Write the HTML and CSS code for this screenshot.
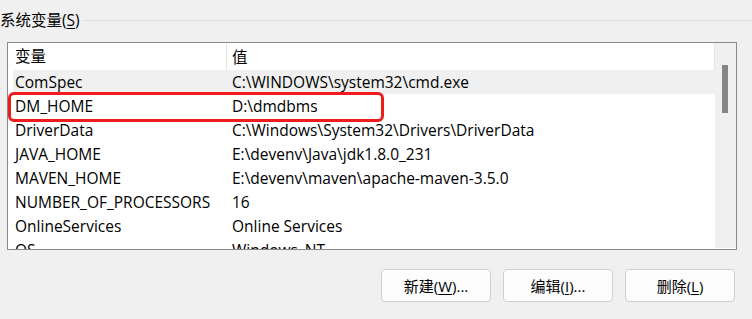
FILE: index.html
```html
<!DOCTYPE html>
<html lang="zh-CN">
<head>
<meta charset="utf-8">
<link rel="stylesheet" href="styles.css">
</head>
<body>
<div class="page">
  <div class="group-title"><span class="label">系统变量(<u>S</u>)</span><span class="rule"></span></div>
  <div class="listbox">
    <div class="list">
      <div class="row head"><div class="c1">变量</div><div class="c2">值</div></div>
      <div class="row sel"><div class="c1">ComSpec</div><div class="c2">C:\WINDOWS\system32\cmd.exe</div></div>
      <div class="row"><div class="c1">DM_HOME</div><div class="c2">D:\dmdbms</div></div>
      <div class="row"><div class="c1">DriverData</div><div class="c2">C:\Windows\System32\Drivers\DriverData</div></div>
      <div class="row"><div class="c1">JAVA_HOME</div><div class="c2">E:\devenv\Java\jdk1.8.0_231</div></div>
      <div class="row"><div class="c1">MAVEN_HOME</div><div class="c2">E:\devenv\maven\apache-maven-3.5.0</div></div>
      <div class="row"><div class="c1">NUMBER_OF_PROCESSORS</div><div class="c2">16</div></div>
      <div class="row"><div class="c1">OnlineServices</div><div class="c2">Online Services</div></div>
      <div class="row"><div class="c1">OS</div><div class="c2">Windows_NT</div></div>
    </div>
    <div class="scrollbar"><div class="thumb"></div></div>
    <div class="highlight"></div>
  </div>
  <div class="buttons">
    <button class="btn">新建(<u>W</u>)...</button>
    <button class="btn">编辑(<u>I</u>)...</button>
    <button class="btn">删除(<u>L</u>)</button>
  </div>
</div>
</body>
</html>
```

FILE: styles.css
```css
html, body {
  margin: 0;
  padding: 0;
  background: #f0f0f0;
}
.page {
  width: 752px;
  height: 319px;
  overflow: hidden;
  font-family: "Open Sans", "Noto Sans CJK SC", sans-serif;
  font-size: 15.5px;
  color: #000;
}
.group-title {
  display: flex;
  align-items: center;
  height: 22px;
  margin-top: 9px;
}
.group-title .label {
  white-space: nowrap;
  line-height: 22px;
}
.group-title u { text-underline-offset: 2px; }
.group-title .rule {
  flex: 1;
  height: 1px;
  background: #dcdcdc;
  margin-left: 3px;
}
.listbox {
  position: relative;
  margin-top: 11px;
  margin-left: 7px;
  width: 728px;
  height: 206px;
  border: 1px solid #8a8a8a;
  background: #fff;
  display: flex;
  overflow: hidden;
}
.list {
  flex: 1;
  padding-left: 5px;
  min-width: 0;
}
.row {
  display: flex;
  height: 24px;
  align-items: center;
  white-space: nowrap;
}
.row.head {
  height: 27px;
  margin-left: -5px;
  padding-left: 5px;
  border-right: 1px solid #e5e5e5;
}
.row.sel { background: #f0f0f0; }
.c1 {
  width: 212px;
  padding-left: 2px;
  flex: none;
}
.row.head .c1 {
  border-right: 1px solid #e5e5e5;
  height: 27px;
  line-height: 27px;
  width: 211px;
}
.c2 { padding-left: 5px; }
.scrollbar {
  width: 21px;
  flex: none;
  background: #f0f0f0;
  position: relative;
  margin-bottom: 1px;
}
.thumb {
  position: absolute;
  left: 7px;
  top: 22px;
  width: 6px;
  height: 48px;
  background: #858585;
}
.highlight {
  position: absolute;
  left: 0;
  top: 49px;
  width: 370px;
  height: 24px;
  border: 3px solid #ee1c1c;
  border-radius: 6px;
}
.buttons {
  display: flex;
  justify-content: flex-end;
  gap: 12px;
  margin-top: 19px;
  padding-right: 17px;
}
.btn {
  width: 110px;
  height: 33px;
  border: 1px solid #d0d0d0;
  border-radius: 4px;
  background: #fdfdfd;
  font-family: "Open Sans", "Noto Sans CJK SC", sans-serif;
  font-size: 15px;
  color: #000;
  padding: 0;
}
.btn u { text-underline-offset: 2px; }
```
